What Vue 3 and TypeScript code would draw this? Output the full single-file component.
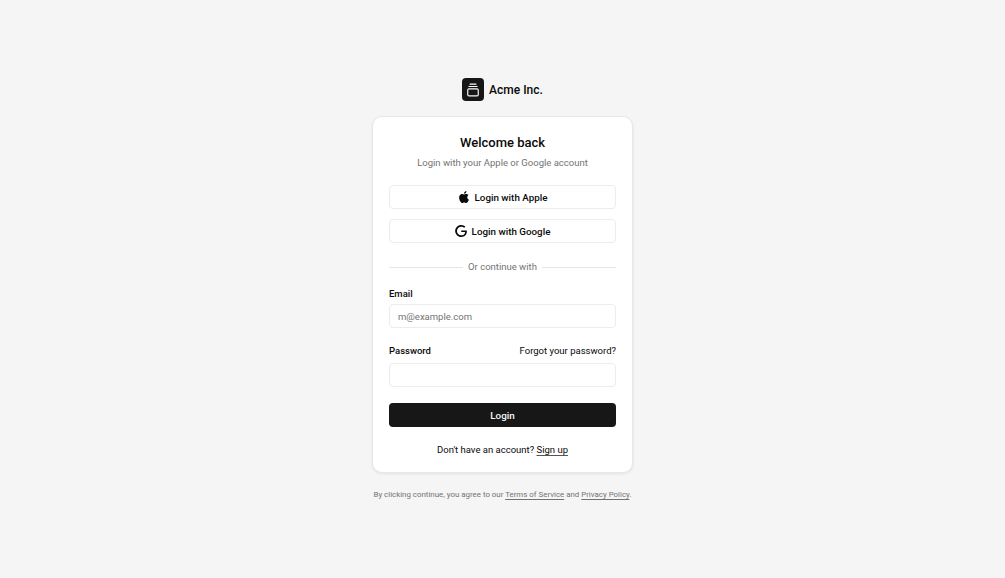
<script setup lang="ts">
import { ref } from "vue"

const email = ref("")
const password = ref("")
</script>

<template>
  <main class="page">
    <div class="brand">
      <span class="brand-mark">
        <svg viewBox="0 0 24 24" width="14" height="14" fill="none" stroke="currentColor" stroke-width="2" stroke-linecap="round" stroke-linejoin="round" aria-hidden="true">
          <rect x="3" y="10" width="18" height="12" rx="2" />
          <path d="M5 6h14M7 2h10" />
        </svg>
      </span>
      <span class="brand-name">Acme Inc.</span>
    </div>

    <section class="card">
      <header class="card-head">
        <h1>Welcome back</h1>
        <p>Login with your Apple or Google account</p>
      </header>

      <div class="socials">
        <button type="button" class="btn-outline">
          <svg viewBox="0 0 24 24" width="12" height="12" aria-hidden="true">
            <path fill="currentColor" d="M12.152 6.896c-.948 0-2.415-1.078-3.96-1.04-2.04.027-3.91 1.183-4.961 3.014-2.117 3.675-.546 9.103 1.519 12.09 1.013 1.454 2.208 3.09 3.792 3.039 1.52-.065 2.09-.987 3.935-.987 1.831 0 2.35.987 3.96.948 1.637-.026 2.676-1.48 3.676-2.948 1.156-1.688 1.636-3.325 1.662-3.415-.039-.013-3.182-1.221-3.22-4.857-.026-3.04 2.48-4.494 2.597-4.559-1.429-2.09-3.623-2.324-4.39-2.376-2-.156-3.675 1.09-4.61 1.09zM15.53 3.83c.843-1.012 1.4-2.427 1.245-3.83-1.207.052-2.662.805-3.532 1.818-.78.896-1.454 2.338-1.273 3.714 1.338.104 2.715-.688 3.559-1.701" />
          </svg>
          Login with Apple
        </button>
        <button type="button" class="btn-outline">
          <svg viewBox="0 0 24 24" width="12" height="12" aria-hidden="true">
            <path fill="currentColor" d="M12.48 10.92v3.28h7.84c-.24 1.84-.853 3.187-1.787 4.133-1.147 1.147-2.933 2.4-6.053 2.4-4.827 0-8.6-3.893-8.6-8.72s3.773-8.72 8.6-8.72c2.6 0 4.507 1.027 5.907 2.347l2.307-2.307C18.747 1.44 16.133 0 12.48 0 5.867 0 .307 5.387.307 12s5.56 12 12.173 12c3.573 0 6.267-1.173 8.373-3.36 2.16-2.16 2.84-5.213 2.84-7.667 0-.76-.053-1.467-.173-2.053H12.48z" />
          </svg>
          Login with Google
        </button>
      </div>

      <div class="divider"><span>Or continue with</span></div>

      <form class="form" @submit.prevent>
        <div class="field field-email">
          <label for="email">Email</label>
          <input id="email" v-model="email" type="email" placeholder="m@example.com" />
        </div>
        <div class="field field-password">
          <div class="field-row">
            <label for="password">Password</label>
            <a href="#">Forgot your password?</a>
          </div>
          <input id="password" v-model="password" type="password" />
        </div>
        <button type="submit" class="btn-primary">Login</button>
        <p class="signup">Don't have an account? <a href="#">Sign up</a></p>
      </form>
    </section>

    <p class="terms">
      By clicking continue, you agree to our <a href="#">Terms of Service</a> and <a href="#">Privacy Policy</a>.
    </p>
  </main>
</template>

<style scoped>
.page {
  box-sizing: border-box;
  min-height: 578px;
  display: flex;
  flex-direction: column;
  align-items: center;
  justify-content: center;
  padding-top: 2px;
  background: #f5f5f5;
  color: #0a0a0a;
  font-family: Roboto, "Open Sans", sans-serif;
  font-size: 9.5px;
}
.brand {
  display: flex;
  align-items: center;
  gap: 5px;
  height: 23px;
  margin-bottom: 15px;
}
.brand-mark {
  width: 22px;
  height: 23px;
  display: flex;
  align-items: center;
  justify-content: center;
  border-radius: 4px;
  background: #171717;
  color: #fafafa;
}
.brand-name {
  font-size: 12px;
  font-weight: 500;
}
.card {
  box-sizing: border-box;
  width: 261px;
  height: 357px;
  padding: 17px 16px 16px;
  background: #fff;
  border: 1px solid #e8e8e8;
  border-radius: 10px;
  box-shadow: 0 1px 3px rgba(0, 0, 0, 0.08);
}
.card-head {
  text-align: center;
}
.card-head h1 {
  margin: 0;
  font-size: 13px;
  line-height: 18px;
  font-weight: 500;
}
.card-head p {
  margin: 3px 0 0;
  font-size: 9.5px;
  line-height: 16px;
  color: #737373;
}
.socials {
  display: flex;
  flex-direction: column;
  gap: 10px;
  margin-top: 14px;
}
.btn-outline {
  display: flex;
  align-items: center;
  justify-content: center;
  gap: 5px;
  height: 24px;
  padding: 0;
  background: #fff;
  border: 1px solid #ececec;
  border-radius: 4px;
  color: #0a0a0a;
  font: 500 9.8px Roboto, "Open Sans", sans-serif;
}
.divider {
  display: flex;
  align-items: center;
  gap: 5px;
  margin-top: 16px;
  color: #737373;
  font-size: 9.5px;
  line-height: 16px;
}
.divider::before,
.divider::after {
  content: "";
  flex: 1;
  height: 1px;
  background: #e5e5e5;
}
.form {
  margin-top: 12px;
}
.field label {
  display: block;
  font-size: 9.5px;
  line-height: 14px;
  font-weight: 500;
}
.field input {
  display: block;
  box-sizing: border-box;
  width: 100%;
  height: 24px;
  margin-top: 5px;
  padding: 0 8px;
  background: #fff;
  border: 1px solid #ececec;
  border-radius: 4px;
  outline: none;
  font: 9.5px Roboto, "Open Sans", sans-serif;
}
.field-email input {
  margin-top: 3px;
}
.field input::placeholder {
  color: #737373;
}
.field-password {
  margin-top: 16px;
}
.field-row {
  display: flex;
  align-items: center;
  justify-content: space-between;
}
.field-row a {
  color: #0a0a0a;
  font-size: 9.5px;
  line-height: 14px;
  text-decoration: none;
}
.btn-primary {
  display: block;
  width: 100%;
  height: 24px;
  margin-top: 16px;
  padding: 0;
  background: #171717;
  border: 0;
  border-radius: 4px;
  color: #fafafa;
  font: 500 9.8px Roboto, "Open Sans", sans-serif;
}
.signup {
  margin: 16px 0 0;
  text-align: center;
  font-size: 9.5px;
  line-height: 14px;
}
.signup a {
  color: inherit;
  text-decoration: underline;
  text-decoration-color: #555;
  text-underline-offset: 2px;
}
.terms {
  margin: 15px 0 0;
  color: #737373;
  font-size: 7.9px;
  line-height: 14px;
}
.terms a {
  color: inherit;
  text-decoration: underline;
  text-underline-offset: 2px;
}
</style>

<style>
body {
  background: #f5f5f5;
}
</style>
